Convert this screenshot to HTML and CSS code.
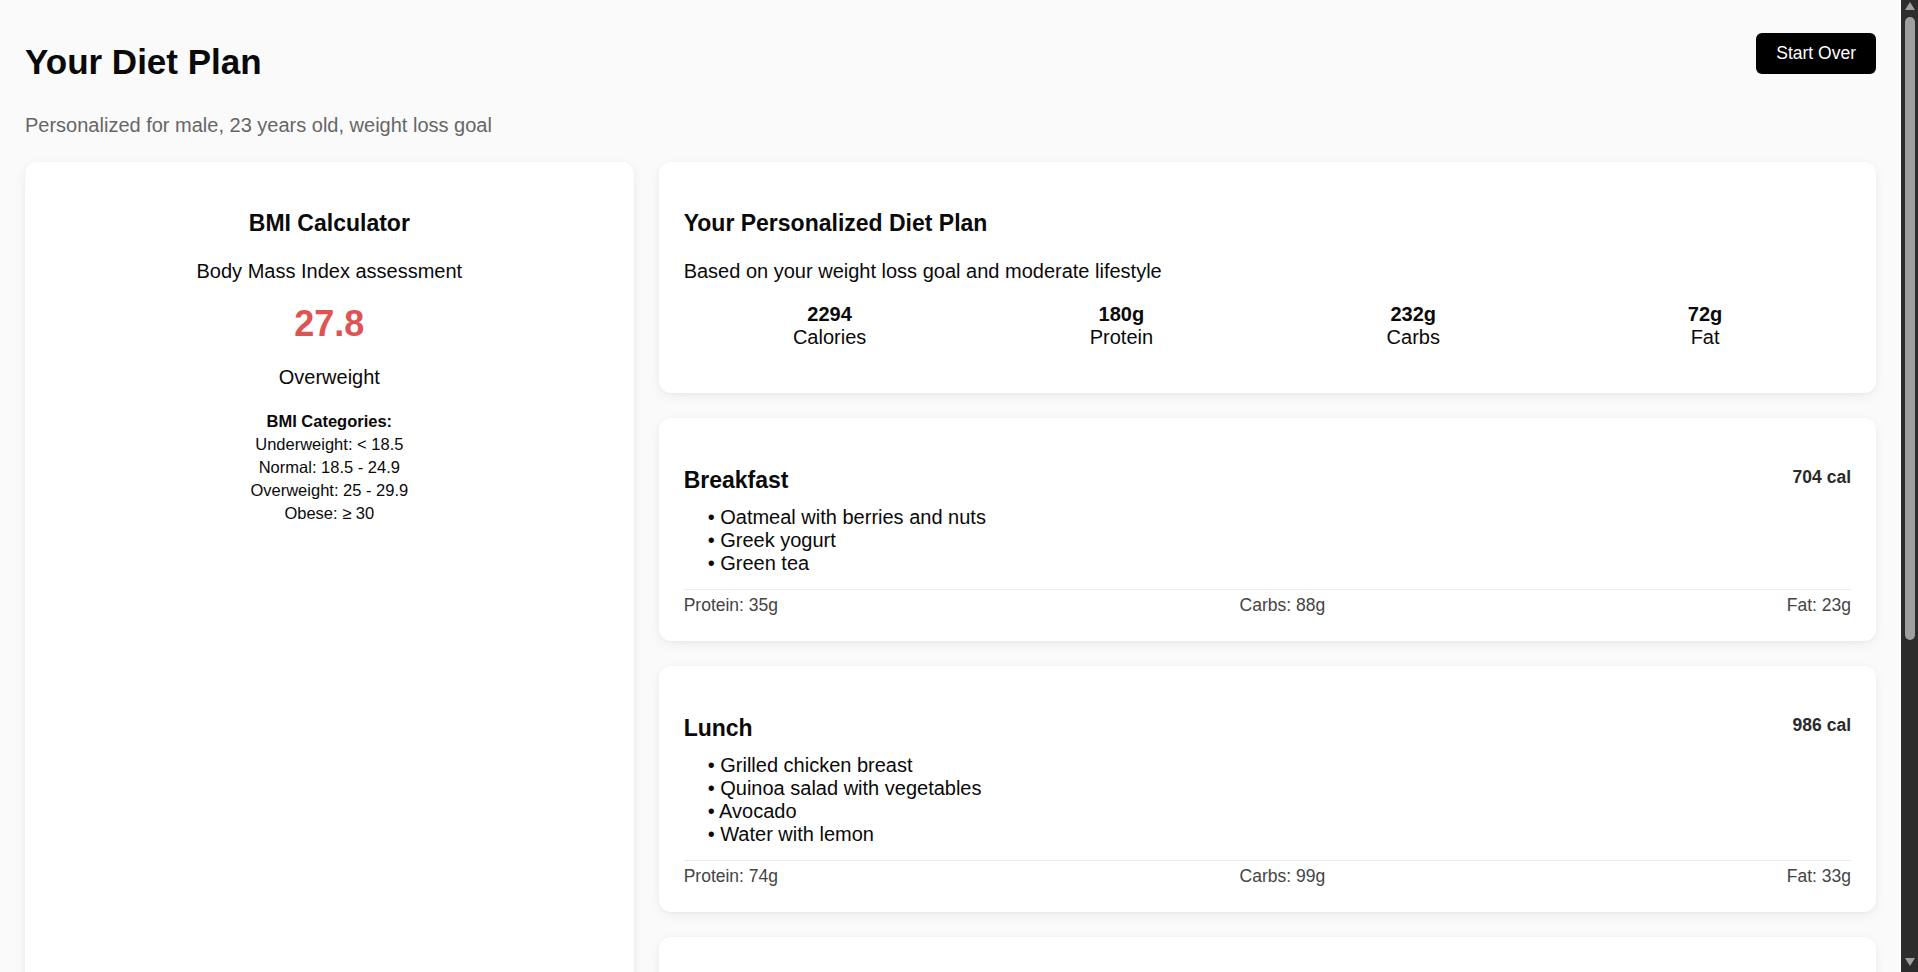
FILE: index.html
```html
<!DOCTYPE html>
<html lang="en">
<head>
<meta charset="utf-8">
<title>Your Diet Plan</title>
<link rel="stylesheet" href="styles.css">
</head>
<body>
<div class="page">
  <header class="page-header">
    <div class="heading">
      <h1 class="page-title">Your Diet Plan</h1>
      <p class="page-subtitle">Personalized for male, 23 years old, weight loss goal</p>
    </div>
    <button class="btn-primary" type="button">Start Over</button>
  </header>

  <main class="layout">
    <section class="card bmi-card">
      <h2 class="card-title">BMI Calculator</h2>
      <p class="card-desc">Body Mass Index assessment</p>
      <div class="bmi-value">27.8</div>
      <div class="bmi-status">Overweight</div>
      <div class="bmi-categories">
        <div class="bmi-categories-title">BMI Categories:</div>
        <div>Underweight: &lt; 18.5</div>
        <div>Normal: 18.5 - 24.9</div>
        <div>Overweight: 25 - 29.9</div>
        <div>Obese: ≥ 30</div>
      </div>
    </section>

    <div class="plan-column">
      <section class="card summary-card">
        <h2 class="card-title">Your Personalized Diet Plan</h2>
        <p class="card-desc">Based on your weight loss goal and moderate lifestyle</p>
        <div class="macro-grid">
          <div class="macro"><div class="macro-value">2294</div><div class="macro-label">Calories</div></div>
          <div class="macro"><div class="macro-value">180g</div><div class="macro-label">Protein</div></div>
          <div class="macro"><div class="macro-value">232g</div><div class="macro-label">Carbs</div></div>
          <div class="macro"><div class="macro-value">72g</div><div class="macro-label">Fat</div></div>
        </div>
      </section>

      <section class="card meal-card">
        <div class="meal-header">
          <h3 class="card-title">Breakfast</h3>
          <span class="meal-cal">704 cal</span>
        </div>
        <ul class="meal-items">
          <li>• Oatmeal with berries and nuts</li>
          <li>• Greek yogurt</li>
          <li>• Green tea</li>
        </ul>
        <div class="meal-macros">
          <span>Protein: 35g</span>
          <span>Carbs: 88g</span>
          <span>Fat: 23g</span>
        </div>
      </section>

      <section class="card meal-card">
        <div class="meal-header">
          <h3 class="card-title">Lunch</h3>
          <span class="meal-cal">986 cal</span>
        </div>
        <ul class="meal-items">
          <li>• Grilled chicken breast</li>
          <li>• Quinoa salad with vegetables</li>
          <li>• Avocado</li>
          <li>• Water with lemon</li>
        </ul>
        <div class="meal-macros">
          <span>Protein: 74g</span>
          <span>Carbs: 99g</span>
          <span>Fat: 33g</span>
        </div>
      </section>

      <section class="card meal-card">
        <div class="meal-header">
          <h3 class="card-title">Dinner</h3>
          <span class="meal-cal">459 cal</span>
        </div>
        <ul class="meal-items">
          <li>• Baked salmon</li>
          <li>• Steamed broccoli</li>
          <li>• Sweet potato</li>
          <li>• Herbal tea</li>
        </ul>
        <div class="meal-macros">
          <span>Protein: 54g</span>
          <span>Carbs: 35g</span>
          <span>Fat: 12g</span>
        </div>
      </section>

      <section class="card meal-card">
        <div class="meal-header">
          <h3 class="card-title">Snacks</h3>
          <span class="meal-cal">145 cal</span>
        </div>
        <ul class="meal-items">
          <li>• Apple slices</li>
          <li>• Almonds</li>
          <li>• Cottage cheese</li>
        </ul>
        <div class="meal-macros">
          <span>Protein: 17g</span>
          <span>Carbs: 10g</span>
          <span>Fat: 4g</span>
        </div>
      </section>
    </div>
  </main>
</div>

<div class="scrollbar" aria-hidden="true">
  <span class="scroll-arrow scroll-arrow-up"></span>
  <div class="scroll-track"><div class="scroll-thumb"></div></div>
  <span class="scroll-arrow scroll-arrow-down"></span>
</div>
</body>
</html>
```

FILE: styles.css
```css
* {
  box-sizing: border-box;
}

html {
  background: #fafafa;
}

body {
  margin: 0;
  background: #fafafa;
  color: #0a0a0a;
  font-family: "Liberation Sans", Arial, sans-serif;
}

.page {
  padding: 33px 42px 33px 25px;
}

.page-header {
  display: flex;
  justify-content: space-between;
  align-items: flex-start;
}

.page-title {
  margin: 9px 0 0;
  font-size: 35px;
  line-height: 40px;
  font-weight: 700;
}

.page-subtitle {
  margin: 29px 0 0;
  font-size: 20px;
  line-height: 28px;
  color: #666666;
}

.btn-primary {
  height: 41px;
  padding: 0 20px;
  border: 0;
  border-radius: 6px;
  background: #000000;
  color: #ffffff;
  font-family: "Liberation Sans", Arial, sans-serif;
  font-size: 17.5px;
  line-height: 41px;
  cursor: pointer;
}

.layout {
  margin-top: 23px;
  display: grid;
  grid-template-columns: 1fr 2fr;
  gap: 25px;
  align-items: stretch;
}

.plan-column {
  display: flex;
  flex-direction: column;
  gap: 25px;
}

.card {
  background: #ffffff;
  border-radius: 12px;
  box-shadow: 0 3px 12px rgba(0, 0, 0, 0.06), 0 1px 3px rgba(0, 0, 0, 0.03);
  padding: 47px 25px 24px;
}

.card-title {
  margin: 0;
  font-size: 23px;
  line-height: 28px;
  font-weight: 700;
}

.card-desc {
  margin: 20px 0 0;
  font-size: 20px;
  line-height: 28px;
}

/* BMI card */
.bmi-card {
  text-align: center;
}

.bmi-value {
  margin-top: 19px;
  font-size: 36px;
  line-height: 40px;
  font-weight: 700;
  color: #df5353;
}

.bmi-status {
  margin-top: 19px;
  font-size: 20px;
  line-height: 28px;
}

.bmi-categories {
  margin-top: 19px;
  font-size: 16.5px;
  line-height: 23px;
}

.bmi-categories-title {
  font-weight: 700;
}

/* Summary card */
.summary-card {
  padding-bottom: 44px;
}

.macro-grid {
  margin-top: 18px;
  display: grid;
  grid-template-columns: repeat(4, 1fr);
  text-align: center;
  font-size: 20px;
  line-height: 23px;
}

.macro-value {
  font-weight: 700;
}

/* Meal cards */
.meal-card {
  padding-top: 48px;
  padding-bottom: 24px;
}

.meal-header {
  display: flex;
  justify-content: space-between;
  align-items: flex-start;
}

.meal-cal {
  font-size: 17.5px;
  line-height: 23px;
  font-weight: 700;
  color: #2a2a2a;
}

.meal-items {
  list-style: none;
  margin: 12px 0 0;
  padding: 0 0 0 24px;
  font-size: 20px;
  line-height: 23px;
}

.meal-macros {
  margin-top: 14px;
  border-top: 1px solid #ebebeb;
  padding-top: 3px;
  display: flex;
  justify-content: space-between;
  font-size: 17.5px;
  line-height: 24px;
  color: #444444;
}

/* Window scrollbar (drawn, as in the reference capture) */
.scrollbar {
  position: fixed;
  top: 0;
  right: 0;
  bottom: 0;
  width: 17px;
  background: #2c2c2c;
  display: flex;
  flex-direction: column;
}

.scroll-arrow {
  display: block;
  height: 17px;
  flex: none;
  position: relative;
}

.scroll-arrow::after {
  content: "";
  position: absolute;
  left: 4px;
  width: 0;
  height: 0;
  border-left: 5px solid transparent;
  border-right: 5px solid transparent;
}

.scroll-arrow-up::after {
  top: 2px;
  border-bottom: 8px solid #9f9f9f;
}

.scroll-arrow-down::after {
  top: 3px;
  border-top: 8px solid #9f9f9f;
}

.scroll-track {
  flex: 1;
}

.scroll-thumb {
  margin-left: 4px;
  width: 10px;
  height: 623px;
  border-radius: 5px;
  background: #9f9f9f;
}
```
